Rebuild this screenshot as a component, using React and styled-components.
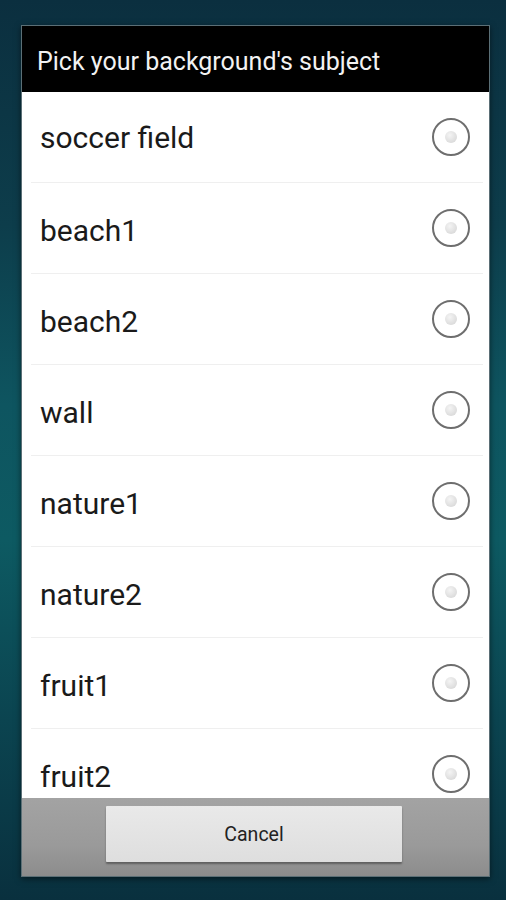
import styled, { createGlobalStyle } from "styled-components";

const GlobalStyle = createGlobalStyle`
  html, body {
    margin: 0;
    padding: 0;
  }
  body {
    font-family: Roboto, "Noto Sans", sans-serif;
  }
`;

const Screen = styled.div`
  width: 506px;
  height: 900px;
  box-sizing: border-box;
  padding: 25px 16px 0 21px;
  background: linear-gradient(
    180deg,
    #0b2f3f 0%,
    #0d3d4b 25%,
    #0e5560 45%,
    #0d5a62 60%,
    #0b4450 80%,
    #09303e 100%
  );
  overflow: hidden;
`;

const Dialog = styled.div`
  width: 469px;
  display: flex;
  flex-direction: column;
  border: 1px solid #5b6f76;
  box-sizing: border-box;
  box-shadow: 0 2px 6px rgba(0, 0, 0, 0.5);
`;

const TitleBar = styled.div`
  height: 66px;
  background: #000;
  color: #f2f2f2;
  font-size: 25px;
  display: flex;
  align-items: center;
  padding: 4px 0 0 15px;
  box-sizing: border-box;
`;

const List = styled.div`
  height: 706px;
  background: #fff;
  overflow: hidden;
  display: flex;
  flex-direction: column;
`;

const Row = styled.div`
  flex: 0 0 91px;
  display: flex;
  align-items: center;
  justify-content: space-between;
  padding: 0 13px 0 9px;
  box-sizing: border-box;
  border-bottom: 1px solid #efefef;
  margin: 0 6px 0 9px;
`;

const Label = styled.span`
  font-size: 30px;
  color: #1a1a1a;
  padding-top: ${(p) => (p.$first ? "0" : "4px")};
`;

const Radio = styled.div`
  width: 38px;
  height: 38px;
  border-radius: 50%;
  border: 2px solid #6e6e6e;
  box-sizing: border-box;
  display: flex;
  align-items: center;
  justify-content: center;
  background: #fff;

  &::after {
    content: "";
    width: 12px;
    height: 12px;
    border-radius: 50%;
    background: radial-gradient(circle at 40% 35%, #f4f4f4, #d2d2d2);
  }
`;

const ButtonBar = styled.div`
  height: 78px;
  background: linear-gradient(180deg, #a3a3a3 0%, #9a9a9a 60%, #8c8c8c 100%);
  display: flex;
  justify-content: center;
  padding-top: 8px;
  padding-right: 3px;
  box-sizing: border-box;
`;

const CancelButton = styled.button`
  width: 296px;
  height: 56px;
  border: none;
  border-radius: 1px;
  background: linear-gradient(180deg, #e9e9e9 0%, #dedede 100%);
  box-shadow: 0 2px 2px rgba(0, 0, 0, 0.35);
  font-family: Roboto, "Noto Sans", sans-serif;
  font-size: 19.5px;
  color: #222;
  padding: 0;
`;

const items = [
  "soccer field",
  "beach1",
  "beach2",
  "wall",
  "nature1",
  "nature2",
  "fruit1",
  "fruit2",
];

function App() {
  return (
    <>
      <GlobalStyle />
      <Screen>
        <Dialog>
          <TitleBar>Pick your background's subject</TitleBar>
          <List>
            {items.map((item, i) => (
              <Row key={item}>
                <Label $first={i === 0}>{item}</Label>
                <Radio />
              </Row>
            ))}
          </List>
          <ButtonBar>
            <CancelButton>Cancel</CancelButton>
          </ButtonBar>
        </Dialog>
      </Screen>
    </>
  );
}

export default App;
